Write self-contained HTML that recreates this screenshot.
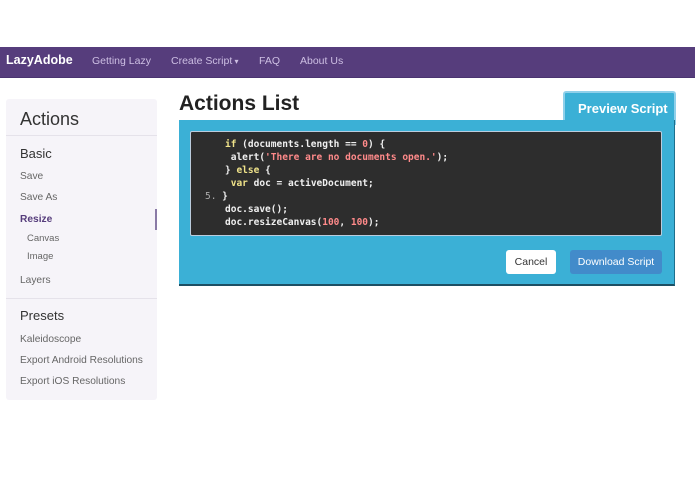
<!DOCTYPE html><html><head><style>
*{margin:0;padding:0;box-sizing:border-box}
body{width:695px;height:494px;background:#fff;font-family:"Liberation Sans",sans-serif;position:relative;overflow:hidden}
.a{position:absolute;white-space:nowrap}
.nav{position:absolute;left:0;top:47px;width:695px;height:31px;background:#563d7c;border-bottom:1px solid #4a3470}
.nav span{position:absolute;top:8px;font-size:10.5px;color:#cdbfe3}
.side{position:absolute;left:6px;top:99px;width:151px;height:301px;background:#f6f4f9;border-radius:3px}
.it{position:absolute;font-size:10.2px;color:#666}
.code{font-family:"DejaVu Sans Mono","Liberation Mono",monospace;font-size:9.5px;font-weight:bold;color:#f0f0f0;position:absolute;left:225px}
.y{color:#f0e38a}.r{color:#ff8a8a}
</style></head><body>
<div class="nav">
<span style="left:6px;top:6px;font-size:12.5px;color:#fff;font-weight:bold">LazyAdobe</span>
<span style="left:92px">Getting Lazy</span>
<span style="left:171px">Create Script<span style="position:static;font-size:8px"> ▾</span></span>
<span style="left:259px">FAQ</span>
<span style="left:300px">About Us</span>
</div>
<div class="side">
<div style="position:absolute;left:0;top:36px;width:151px;border-top:1px solid #e5e2ea"></div>
<div style="position:absolute;left:0;top:199px;width:151px;border-top:1px solid #e5e2ea"></div>
<div style="position:absolute;left:149px;top:110px;width:2px;height:21px;background:#8a7aa6"></div>
</div>
<div class="a" style="left:20px;top:109px;font-size:18px;color:#333">Actions</div>
<div class="a" style="left:20px;top:146px;font-size:13px;color:#333">Basic</div>
<div class="it" style="left:20px;top:171px">Save</div>
<div class="it" style="left:20px;top:192px">Save As</div>
<div class="it" style="left:20px;top:214px;color:#563d7c;font-weight:bold">Resize</div>
<div class="it" style="left:27px;top:233px;font-size:9.5px">Canvas</div>
<div class="it" style="left:27px;top:251px;font-size:9.5px">Image</div>
<div class="it" style="left:20px;top:275px">Layers</div>
<div class="a" style="left:20px;top:308px;font-size:13px;color:#333">Presets</div>
<div class="it" style="left:20px;top:334px">Kaleidoscope</div>
<div class="it" style="left:20px;top:355px">Export Android Resolutions</div>
<div class="it" style="left:20px;top:376px">Export iOS Resolutions</div>
<div class="a" style="left:179px;top:92px;font-size:21px;font-weight:bold;color:#222">Actions List</div>
<div class="a" style="left:563px;top:91px;width:113px;height:34px;background:#3bb0d6;border:2px solid #8fd0ea;border-bottom:none;border-radius:3px 3px 0 0"></div>
<div class="a" style="left:578px;top:101px;font-size:13px;color:#fff;font-weight:bold">Preview Script</div>
<div class="a" style="left:179px;top:120px;width:496px;height:166px;background:#3bb0d6;border-bottom:2px solid #1d4f63;border-right:1px solid #1d6f8d"></div>
<div class="a" style="left:190px;top:131px;width:472px;height:105px;background:#2d2d2d;border:1px solid #bcd;border-radius:2px"></div>
<div class="code" style="top:139px"><span class="y">if</span> (documents.length == <span class="r">0</span>) {</div>
<div class="code" style="top:152px">&nbsp;alert(<span class="r">'There are no documents open.'</span>);</div>
<div class="code" style="top:165px">} <span class="y">else</span> {</div>
<div class="code" style="top:178px">&nbsp;<span class="y">var</span> doc = activeDocument;</div>
<div class="code" style="top:191px;left:205px"><span style="color:#aaa;font-weight:normal">5.</span> }</div>
<div class="code" style="top:204px">doc.save();</div>
<div class="code" style="top:217px">doc.resizeCanvas(<span class="r">100</span>, <span class="r">100</span>);</div>
<div class="a" style="left:506px;top:250px;width:50px;height:24px;background:#fff;border-radius:3px;font-size:10.5px;color:#333;text-align:center;line-height:25px">Cancel</div>
<div class="a" style="left:570px;top:250px;width:92px;height:24px;background:#428bca;border-radius:3px;font-size:10.5px;color:#fff;text-align:center;line-height:25px">Download Script</div>
</body></html>
